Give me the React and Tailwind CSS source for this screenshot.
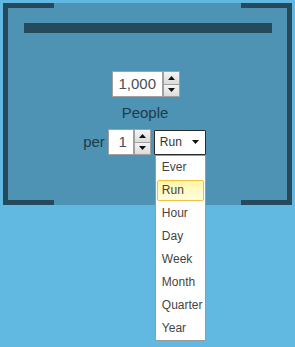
import React from 'react';

const Spinner = () => (
  <div className="flex flex-col w-[17px] h-[26px] border border-[#a0a0a0] bg-[#e8e8e8]">
    <div className="flex-1 flex items-center justify-center border-b border-[#a0a0a0] bg-gradient-to-b from-[#f4f4f4] to-[#dcdcdc]">
      <svg width="7" height="4" viewBox="0 0 7 4"><path d="M0 4 L3.5 0 L7 4 Z" fill="#111" /></svg>
    </div>
    <div className="flex-1 flex items-center justify-center bg-gradient-to-b from-[#f4f4f4] to-[#dcdcdc]">
      <svg width="7" height="4" viewBox="0 0 7 4"><path d="M0 0 L7 0 L3.5 4 Z" fill="#111" /></svg>
    </div>
  </div>
);

const NumberBox = ({ value, width }) => (
  <div className="flex items-center">
    <div
      className={`${width} h-[26px] bg-white border border-[#a0a0a0] flex items-center justify-end pr-[6px] text-[15px] text-[#4b4f55]`}
    >
      {value}
    </div>
    <Spinner />
  </div>
);

const options = ['Ever', 'Run', 'Hour', 'Day', 'Week', 'Month', 'Quarter', 'Year'];

export default function App() {
  return (
    <div
      className="w-[295px] h-[347px] bg-[#61b8e0] pt-[3px] px-[3px]"
      style={{ fontFamily: '"Liberation Sans", Arial, sans-serif' }}
    >
      <div className="relative w-[289px] h-[202px] bg-[#4e93b3] border-x-[5px] border-[#254a5b] flex flex-col items-center">
        <div className="absolute -left-[5px] top-0 w-[51px] h-[5px] bg-[#254a5b]" />
        <div className="absolute -right-[5px] top-0 w-[51px] h-[5px] bg-[#254a5b]" />
        <div className="absolute -left-[5px] bottom-0 w-[51px] h-[5px] bg-[#254a5b]" />
        <div className="absolute -right-[5px] bottom-0 w-[51px] h-[5px] bg-[#254a5b]" />

        <div className="mt-[20px] w-[248px] h-[10px] bg-[#254a5b] ml-[1px]" />

        <div className="mt-[38px] -ml-[3px]">
          <NumberBox value="1,000" width="w-[51px]" />
        </div>

        <div className="mt-[4px] text-[15px] leading-[24px] text-[#1d3b49] -ml-[5px]">People</div>

        <div className="mt-[4px] flex items-center -ml-[6px]">
          <span className="text-[15px] text-[#1d3b49] mr-[3px]">per</span>
          <NumberBox value="1" width="w-[26px]" />
          <div className="relative ml-[3px]">
            <div className="w-[52px] h-[25px] bg-white border border-[#2a2a2a] rounded-[1px] flex items-center justify-between pl-[5px] pr-[6px] text-[12px] text-[#333]">
              <span>Run</span>
              <svg width="7" height="4" viewBox="0 0 7 4"><path d="M0 0 L7 0 L3.5 4 Z" fill="#111" /></svg>
            </div>
            <div className="absolute left-[1px] top-full w-[51px] bg-white border border-[#9a9a9a] z-10">
              {options.map((o) => (
                <div key={o} className="h-[23px] flex items-center px-[1px]">
                  <div
                    className={`w-full h-[21px] flex items-center pl-[4px] text-[12px] text-[#444] ${
                      o === 'Run'
                        ? 'border border-[#f2c23d] rounded-[2px] bg-gradient-to-b from-[#fff6a8] to-[#fffde2]'
                        : 'border border-transparent'
                    }`}
                  >
                    {o}
                  </div>
                </div>
              ))}
            </div>
          </div>
        </div>
      </div>
    </div>
  );
}
